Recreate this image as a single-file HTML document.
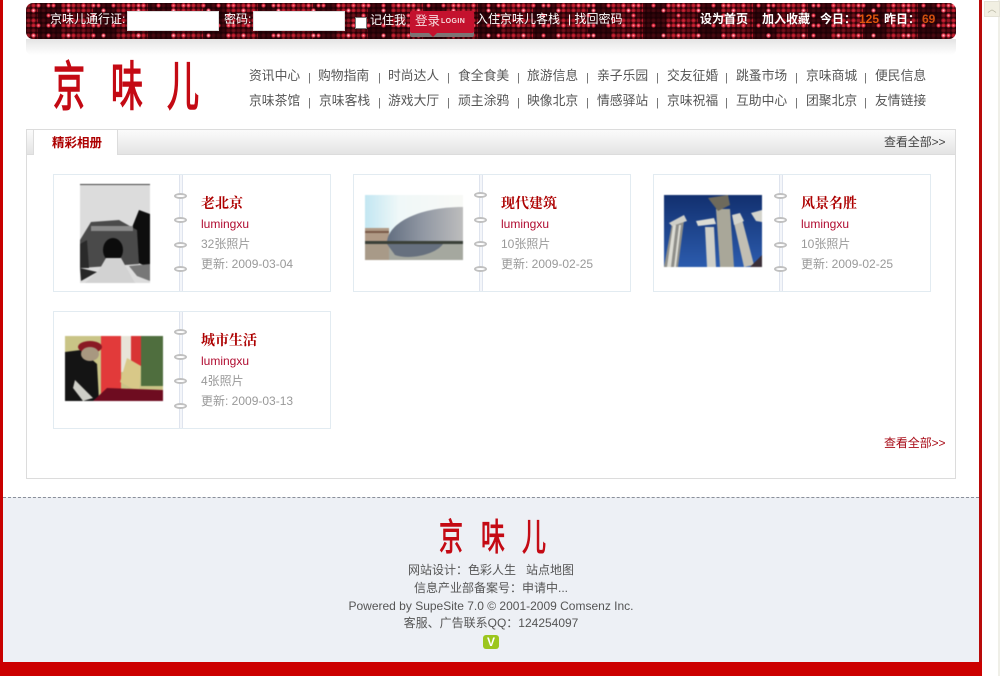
<!DOCTYPE html>
<html lang="zh-CN">
<head>
<meta charset="utf-8">
<title>京味儿</title>
<style>
html,body{margin:0;padding:0;width:1003px;height:676px;overflow:hidden;background:#fff}
body{position:relative;font:12px "Liberation Sans","Noto Sans CJK SC",sans-serif;color:#555}
.a,.t{position:absolute;white-space:nowrap}
.t{line-height:16px}
#bar{left:26px;top:3px;width:930px;height:36px;border-radius:7px;overflow:hidden;background-color:#2e0308;
background-image:
radial-gradient(circle at 2.5px 2.5px,#ffe0e4 0,#f85068 1.3px,rgba(240,60,80,.35) 2.1px,transparent 2.6px),
radial-gradient(circle at 2.5px 2.5px,#ff8a98 0,#e02840 1.4px,transparent 2.5px),
radial-gradient(circle at 2.5px 2.5px,#ffb0b8 0,#e83048 1.3px,transparent 2.5px),
linear-gradient(90deg,rgba(25,0,4,.72) 0 42%,transparent 42%),
linear-gradient(rgba(25,0,4,.5) 0 40%,transparent 40%),
radial-gradient(circle at 2.5px 2.5px,#d8283c 0,#b01828 1.4px,transparent 2.5px),
radial-gradient(circle at 2.5px 2.5px,#a01824 0,#8a1420 1.6px,rgba(110,14,24,.4) 2.3px,transparent 2.7px);
background-size:35px 25px,15px 20px,45px 10px,55px 100%,100% 15px,10px 5px,5px 5px;
background-position:5px 5px,10px 0,20px 30px,12px 0,0 9px,5px 0,0 0}
.w{color:#fff;font-size:12px}
.wb{color:#fff;font-size:12px;font-weight:bold}
.input{background:#fff;border:1px solid #ddd;box-sizing:border-box;height:20px;width:92px;top:11px}
.nav{font-size:12.8px;color:#555}
.sep{font-size:11px;color:#666}
.card{position:absolute;width:278px;height:118px;box-sizing:border-box;border:1px solid #e2ebf1;background:#fff}
.card i{position:absolute;top:0;bottom:0;left:125px;width:4px;box-sizing:border-box;border-left:1px solid #dfe4ee;border-right:1px solid #dfe4ee;background:#f4f6fa}
.card u{position:absolute;left:120px;width:13px;height:6px;border:2px solid #c0c0c0;border-radius:50%;box-sizing:border-box;background:#fff}
.ti{position:absolute;left:147px;top:20px;font:bold 14px/16px "Noto Serif CJK SC","Liberation Serif",serif;color:#ad0000;white-space:nowrap}
.au{position:absolute;left:147px;top:41px;font-size:12px;line-height:16px;color:#b00c30}
.n1,.n2{position:absolute;left:147px;font-size:12px;line-height:16px;color:#999;white-space:nowrap}
.n1{top:61px}.n2{top:81px}
.ph{position:absolute;display:block;filter:blur(.6px)}
.logo{position:absolute;font-family:"Noto Sans CJK SC",sans-serif;font-weight:400;color:#c40a14;line-height:1;white-space:nowrap;transform-origin:0 0}
.l1{font-size:32px;transform:scaleY(1.65);-webkit-text-stroke:.9px #c40a14}
.l2{font-size:24px;transform:scaleY(1.55);-webkit-text-stroke:.6px #c40a14}
.f{position:absolute;left:0;width:982px;text-align:center;line-height:16px;font-size:12px;color:#555;white-space:nowrap}
</style>
</head>
<body>
<!-- frame -->
<div class="a" style="left:0;top:0;width:3px;height:676px;background:#c80000"></div>
<div class="a" style="left:979px;top:0;width:3px;height:676px;background:#b80a0a"></div>
<div class="a" style="left:982px;top:0;width:21px;height:676px;background:#fff"></div>
<div class="a" style="left:998px;top:0;width:2px;height:676px;background:#efefe8"></div>
<div class="a" style="left:984px;top:1px;width:16px;height:16px;background:#f1efe2;border:1px solid #e4e2d6;box-sizing:border-box;color:#b5b39f;font-size:9px;line-height:15px;text-align:center">︿</div>

<!-- top bar -->
<div id="bar" class="a"></div>
<div class="a" style="left:26px;top:39px;width:930px;height:16px;border-radius:0 0 6px 6px;background:linear-gradient(#e4e4e4,#f2f2f2 50%,#fff)"></div>
<div class="t w" style="left:50px;top:11px">京味儿通行证:</div>
<div class="a input" style="left:127px"></div>
<div class="t w" style="left:224px;top:11px">密码:</div>
<div class="a input" style="left:253px"></div>
<div class="a" style="left:355px;top:17px;width:12px;height:12px;background:#fff;border:1px solid #777;box-sizing:border-box"></div>
<div class="t w" style="left:370px;top:12px">记住我</div>
<div class="a" style="left:410px;top:11px;width:64px;height:22px;background:#c4122e;border-radius:2px;box-shadow:0 4px 0 #7d7474"></div>
<div class="a" style="left:429px;top:33px;width:0;height:0;border:4px solid transparent;border-top-color:#c4122e"></div>
<div class="t" style="left:415px;top:13px;color:#f6dcde;font-size:12.5px">登录</div>
<div class="t" style="left:441px;top:14px;color:#f6dcde;font-size:7px;font-weight:bold;letter-spacing:.4px">LOGIN</div>
<div class="t w" style="left:476px;top:11px">入住京味儿客栈</div>
<div class="t w" style="left:568px;top:11px">| 找回密码</div>
<div class="t wb" style="left:700px;top:11px">设为首页</div>
<div class="t wb" style="left:762px;top:11px">加入收藏</div>
<div class="t wb" style="left:820px;top:11px">今日：</div>
<div class="t" style="left:859px;top:11px;color:#e0560c;font-size:12px;font-weight:bold">125</div>
<div class="t wb" style="left:884px;top:11px">昨日：</div>
<div class="t" style="left:922px;top:11px;color:#d0500e;font-size:12px;font-weight:bold">69</div>

<!-- logo -->
<div class="logo l1" style="left:53px;top:57px">京</div>
<div class="logo l1" style="left:111px;top:57px">味</div>
<div class="logo l1" style="left:167px;top:57px">儿</div>

<!-- nav -->
<div class="t nav" style="left:249px;top:68px">资讯中心</div><div class="t sep" style="left:308px;top:70px">|</div>
<div class="t nav" style="left:318px;top:68px">购物指南</div><div class="t sep" style="left:378px;top:70px">|</div>
<div class="t nav" style="left:388px;top:68px">时尚达人</div><div class="t sep" style="left:447px;top:70px">|</div>
<div class="t nav" style="left:458px;top:68px">食全食美</div><div class="t sep" style="left:517px;top:70px">|</div>
<div class="t nav" style="left:527px;top:68px">旅游信息</div><div class="t sep" style="left:586px;top:70px">|</div>
<div class="t nav" style="left:597px;top:68px">亲子乐园</div><div class="t sep" style="left:656px;top:70px">|</div>
<div class="t nav" style="left:667px;top:68px">交友征婚</div><div class="t sep" style="left:725px;top:70px">|</div>
<div class="t nav" style="left:736px;top:68px">跳蚤市场</div><div class="t sep" style="left:795px;top:70px">|</div>
<div class="t nav" style="left:806px;top:68px">京味商城</div><div class="t sep" style="left:864px;top:70px">|</div>
<div class="t nav" style="left:875px;top:68px">便民信息</div>

<div class="t nav" style="left:249px;top:93px">京味茶馆</div><div class="t sep" style="left:308px;top:95px">|</div>
<div class="t nav" style="left:319px;top:93px">京味客栈</div><div class="t sep" style="left:378px;top:95px">|</div>
<div class="t nav" style="left:388px;top:93px">游戏大厅</div><div class="t sep" style="left:447px;top:95px">|</div>
<div class="t nav" style="left:458px;top:93px">顽主涂鸦</div><div class="t sep" style="left:517px;top:95px">|</div>
<div class="t nav" style="left:527px;top:93px">映像北京</div><div class="t sep" style="left:586px;top:95px">|</div>
<div class="t nav" style="left:597px;top:93px">情感驿站</div><div class="t sep" style="left:656px;top:95px">|</div>
<div class="t nav" style="left:667px;top:93px">京味祝福</div><div class="t sep" style="left:725px;top:95px">|</div>
<div class="t nav" style="left:736px;top:93px">互助中心</div><div class="t sep" style="left:795px;top:95px">|</div>
<div class="t nav" style="left:806px;top:93px">团聚北京</div><div class="t sep" style="left:864px;top:95px">|</div>
<div class="t nav" style="left:875px;top:93px">友情链接</div>

<!-- panel -->
<div class="a" style="left:26px;top:129px;width:930px;height:350px;box-sizing:border-box;border:1px solid #dcdcdc;background:#fff"></div>
<div class="a" style="left:27px;top:130px;width:928px;height:25px;box-sizing:border-box;border-bottom:1px solid #dcdcdc;background:linear-gradient(#fbfbfb,#e4e4e4)"></div>
<div class="a" style="left:33px;top:130px;width:85px;height:25px;box-sizing:border-box;background:#fff;border-left:1px solid #dcdcdc;border-right:1px solid #dcdcdc"></div>
<div class="t" style="left:52px;top:135px;font-size:12.5px;font-weight:bold;color:#ad0000">精彩相册</div>
<div class="t" style="left:884px;top:134px;font-size:12px;color:#444;letter-spacing:-.1px">查看全部&gt;&gt;</div>

<!-- card 1 -->
<div class="card" style="left:53px;top:174px"><i></i>
<u style="top:18px"></u><u style="top:42px"></u><u style="top:67px"></u><u style="top:91px"></u>
<svg class="ph" style="left:23px;top:9px" width="73" height="99" viewBox="0 0 73 99">
<rect width="73" height="99" fill="#dcdcdc"/><rect width="73" height="1" fill="#444"/>
<path d="M0 0H3V99H0Z" fill="#fff"/><path d="M54 46L62 26 73 30V84L50 74Z" fill="#0e0e0e"/>
<path d="M3 56L14 38 42 36 60 46 62 80 3 84Z" fill="#4a4a4a"/><path d="M14 42H56V47H14Z" fill="#8a8a8a"/>
<path d="M3 60L10 56 12 84 3 84Z" fill="#2a2a2a"/>
<ellipse cx="36" cy="66" rx="10" ry="12" fill="#0c0c0c"/><path d="M29 74H44L58 99H8L22 86Z" fill="#d2d2d2"/>
<path d="M3 84L20 88 4 97Z" fill="#262626"/><path d="M52 82L73 80V97L60 92Z" fill="#777"/></svg>
<div class="ti">老北京</div><div class="au">lumingxu</div><div class="n1">32张照片</div><div class="n2">更新: 2009-03-04</div></div>

<!-- card 2 -->
<div class="card" style="left:353px;top:174px"><i></i>
<u style="top:17px"></u><u style="top:42px"></u><u style="top:66px"></u><u style="top:91px"></u>
<svg class="ph" style="left:11px;top:20px" width="98" height="65" viewBox="0 0 98 65">
<defs><linearGradient id="s2" x1="0" y1="0" x2="1" y2="0"><stop offset="0" stop-color="#c2e6f2"/><stop offset=".35" stop-color="#f0f8f8"/><stop offset="1" stop-color="#f8f9f6"/></linearGradient>
<linearGradient id="d2" x1="0" y1="0" x2="1" y2="0"><stop offset="0" stop-color="#626e80"/><stop offset=".45" stop-color="#8f96a2"/><stop offset="1" stop-color="#bdbdbd"/></linearGradient></defs>
<rect width="98" height="65" fill="url(#s2)"/>
<rect y="33" width="24" height="14" fill="#b09a86"/><rect y="36" width="24" height="2" fill="#7a5a48"/>
<path d="M22 48C22 30 50 12 98 12V48Z" fill="url(#d2)"/>
<rect y="46" width="98" height="3" fill="#3a4038"/>
<rect y="49" width="98" height="16" fill="#a5a89f"/><path d="M0 49H24V65H0Z" fill="#a89a88"/>
<path d="M22 49H78C70 60 44 65 30 60Z" fill="#66707e"/></svg>
<div class="ti">现代建筑</div><div class="au">lumingxu</div><div class="n1">10张照片</div><div class="n2">更新: 2009-02-25</div></div>

<!-- card 3 -->
<div class="card" style="left:653px;top:174px"><i></i>
<u style="top:18px"></u><u style="top:42px"></u><u style="top:67px"></u><u style="top:91px"></u>
<svg class="ph" style="left:10px;top:20px" width="98" height="72" viewBox="0 0 98 72">
<defs><linearGradient id="s3" x1="0" y1="0" x2="0" y2="1"><stop offset="0" stop-color="#12306f"/><stop offset="1" stop-color="#2c5cae"/></linearGradient></defs>
<rect width="98" height="72" fill="url(#s3)"/>
<path d="M0 72L8 28 20 26 14 72Z" fill="#8f8f8a"/><path d="M3 72L9 30 12 30 7 72ZM10 72L15 30 17 30 12 72Z" fill="#dcdcd4"/><path d="M5 28L20 20 23 26 8 31Z" fill="#cfcfc8"/>
<path d="M41 32H50L52 72H43Z" fill="#cfcfc8"/><path d="M32 26L50 23 52 29 34 31Z" fill="#dcdcd4"/>
<path d="M52 14H66L70 72H56Z" fill="#a9a799"/><path d="M44 3L64 0 66 10 54 16Z" fill="#6e6a5c"/>
<path d="M70 28L78 24 90 70 80 72Z" fill="#c2bfb3"/><path d="M68 20L76 18 80 26 70 30Z" fill="#d4d4cc"/><path d="M87 18L98 15V27L92 26Z" fill="#d4d4cc"/>
<path d="M86 72L98 60V72H86Z" fill="#3a2f38"/></svg>
<div class="ti">风景名胜</div><div class="au">lumingxu</div><div class="n1">10张照片</div><div class="n2">更新: 2009-02-25</div></div>

<!-- card 4 -->
<div class="card" style="left:53px;top:311px"><i></i>
<u style="top:17px"></u><u style="top:42px"></u><u style="top:66px"></u><u style="top:91px"></u>
<svg class="ph" style="left:11px;top:24px" width="98" height="65" viewBox="0 0 98 65">
<rect width="98" height="65" fill="#c9c486"/>
<rect x="36" width="20" height="65" fill="#e23a3a"/><rect x="66" width="10" height="30" fill="#d83434"/>
<rect x="56" width="10" height="36" fill="#e8e4d8"/><rect x="76" width="22" height="50" fill="#4f6e3e"/>
<path d="M0 16L16 14 32 28 34 65H0Z" fill="#141414"/>
<ellipse cx="25" cy="11" rx="12" ry="6" fill="#8a1a24"/><ellipse cx="25" cy="18" rx="9" ry="7" fill="#a89880"/>
<path d="M55 46L62 22 76 30 74 56Z" fill="#d8c888"/>
<path d="M28 65L42 52 98 54V65Z" fill="#6e0c20"/><path d="M10 44L28 62 18 65 8 52Z" fill="#cfcfc8"/></svg>
<div class="ti">城市生活</div><div class="au">lumingxu</div><div class="n1">4张照片</div><div class="n2">更新: 2009-03-13</div></div>

<div class="t" style="left:884px;top:435px;font-size:12px;color:#a80c18;letter-spacing:-.1px">查看全部&gt;&gt;</div>

<!-- footer -->
<div class="a" style="left:3px;top:497px;width:976px;height:165px;box-sizing:border-box;border-top:1px dashed #8a8f9a;background:#edf0f5"></div>
<div class="logo l2" style="left:439px;top:516px">京</div>
<div class="logo l2" style="left:481px;top:516px">味</div>
<div class="logo l2" style="left:522px;top:516px">儿</div>
<div class="f" style="top:562px">网站设计：色彩人生&nbsp;&nbsp;&nbsp;站点地图</div>
<div class="f" style="top:580px">信息产业部备案号：申请中...</div>
<div class="f" style="top:598px">Powered by SupeSite 7.0 © 2001-2009 Comsenz Inc.</div>
<div class="f" style="top:615px">客服、广告联系QQ：124254097</div>
<div class="a" style="left:483px;top:635px;width:16px;height:14px;border-radius:3px;background:#9cc61e;color:#fff;font:bold 12px/14px 'Liberation Sans',sans-serif;text-align:center">V</div>
<div class="a" style="left:0;top:662px;width:982px;height:14px;background:#cc0000"></div>
</body>
</html>
